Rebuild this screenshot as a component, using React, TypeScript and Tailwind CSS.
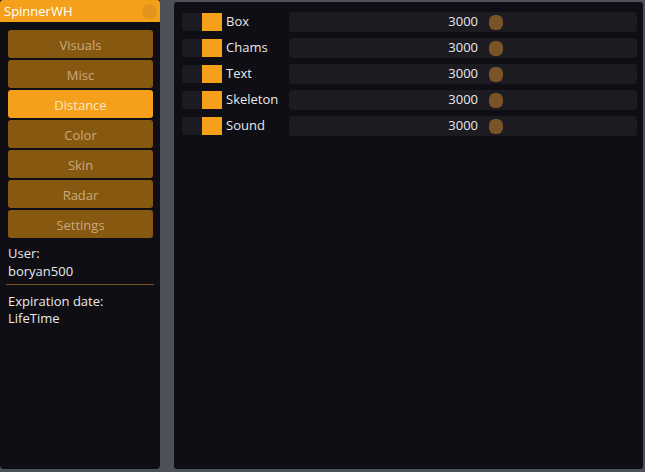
import { useState } from 'react';

const tabs = ['Visuals', 'Misc', 'Distance', 'Color', 'Skin', 'Radar', 'Settings'];

const rows = [
  { name: 'Box', value: 3000 },
  { name: 'Chams', value: 3000 },
  { name: 'Text', value: 3000 },
  { name: 'Skeleton', value: 3000 },
  { name: 'Sound', value: 3000 },
];

export default function App() {
  const [active, setActive] = useState('Distance');

  return (
    <div
      className="w-[645px] h-[472px] bg-[#4b5156] flex items-start text-[13px] text-[#e9e9e9]"
      style={{ fontFamily: '"Open Sans", "DejaVu Sans", sans-serif' }}
    >
      {/* sidebar */}
      <div className="w-[160px] h-[469px] bg-[#0f0e14] rounded-b-[4px] flex flex-col">
        <div className="h-[22px] bg-[#f4a01a] rounded-t-[3px] flex items-center justify-between pl-[4px] pr-[3px]">
          <span className="text-white leading-none pt-[1px]">SpinnerWH</span>
          <div className="w-[15px] h-[15px] rounded-full bg-[#e3941c]" />
        </div>

        <div className="flex flex-col gap-[2px] pl-[8px] pr-[7px] mt-[8px]">
          {tabs.map((t) => (
            <button
              key={t}
              onClick={() => setActive(t)}
              className={
                t === active
                  ? 'h-[28px] pt-[3px] rounded-[3px] bg-[#f4a01a] text-[#fbe6c4]'
                  : 'h-[28px] pt-[3px] rounded-[3px] bg-[#875810] text-[#c9aa7c]'
              }
            >
              {t}
            </button>
          ))}
        </div>

        <div className="px-[8px] mt-[6px] leading-[18px]">
          <div>User:</div>
          <div>boryan500</div>
        </div>
        <div className="mx-[6px] mt-[4px] h-px bg-[#7a5220]" />
        <div className="px-[8px] mt-[8px] leading-[17px]">
          <div>Expiration date:</div>
          <div>LifeTime</div>
        </div>
      </div>

      {/* content */}
      <div className="ml-[14px] mt-[2px] w-[469px] h-[467px] bg-[#0f0e14] rounded-[3px] pt-[11px] pl-[8px] pr-[6px] flex flex-col gap-[8px]">
        {rows.map((r) => (
          <div key={r.name} className="flex items-center h-[18px]">
            <div className="w-[40px] h-[18px] bg-[#1c1b22] rounded-[2px] flex justify-end">
              <div className="w-[20px] h-[18px] bg-[#f4a01a]" />
            </div>
            <span className="ml-[4px] w-[63px]">{r.name}</span>
            <div className="flex-1 h-[20px] bg-[#1c1b22] rounded-[3px] flex items-center">
              <span className="w-[189px] text-right">{r.value}</span>
              <div className="ml-[11px] w-[14px] h-[15px] rounded-[6px] bg-[#7a5426]" />
            </div>
          </div>
        ))}
      </div>
    </div>
  );
}
